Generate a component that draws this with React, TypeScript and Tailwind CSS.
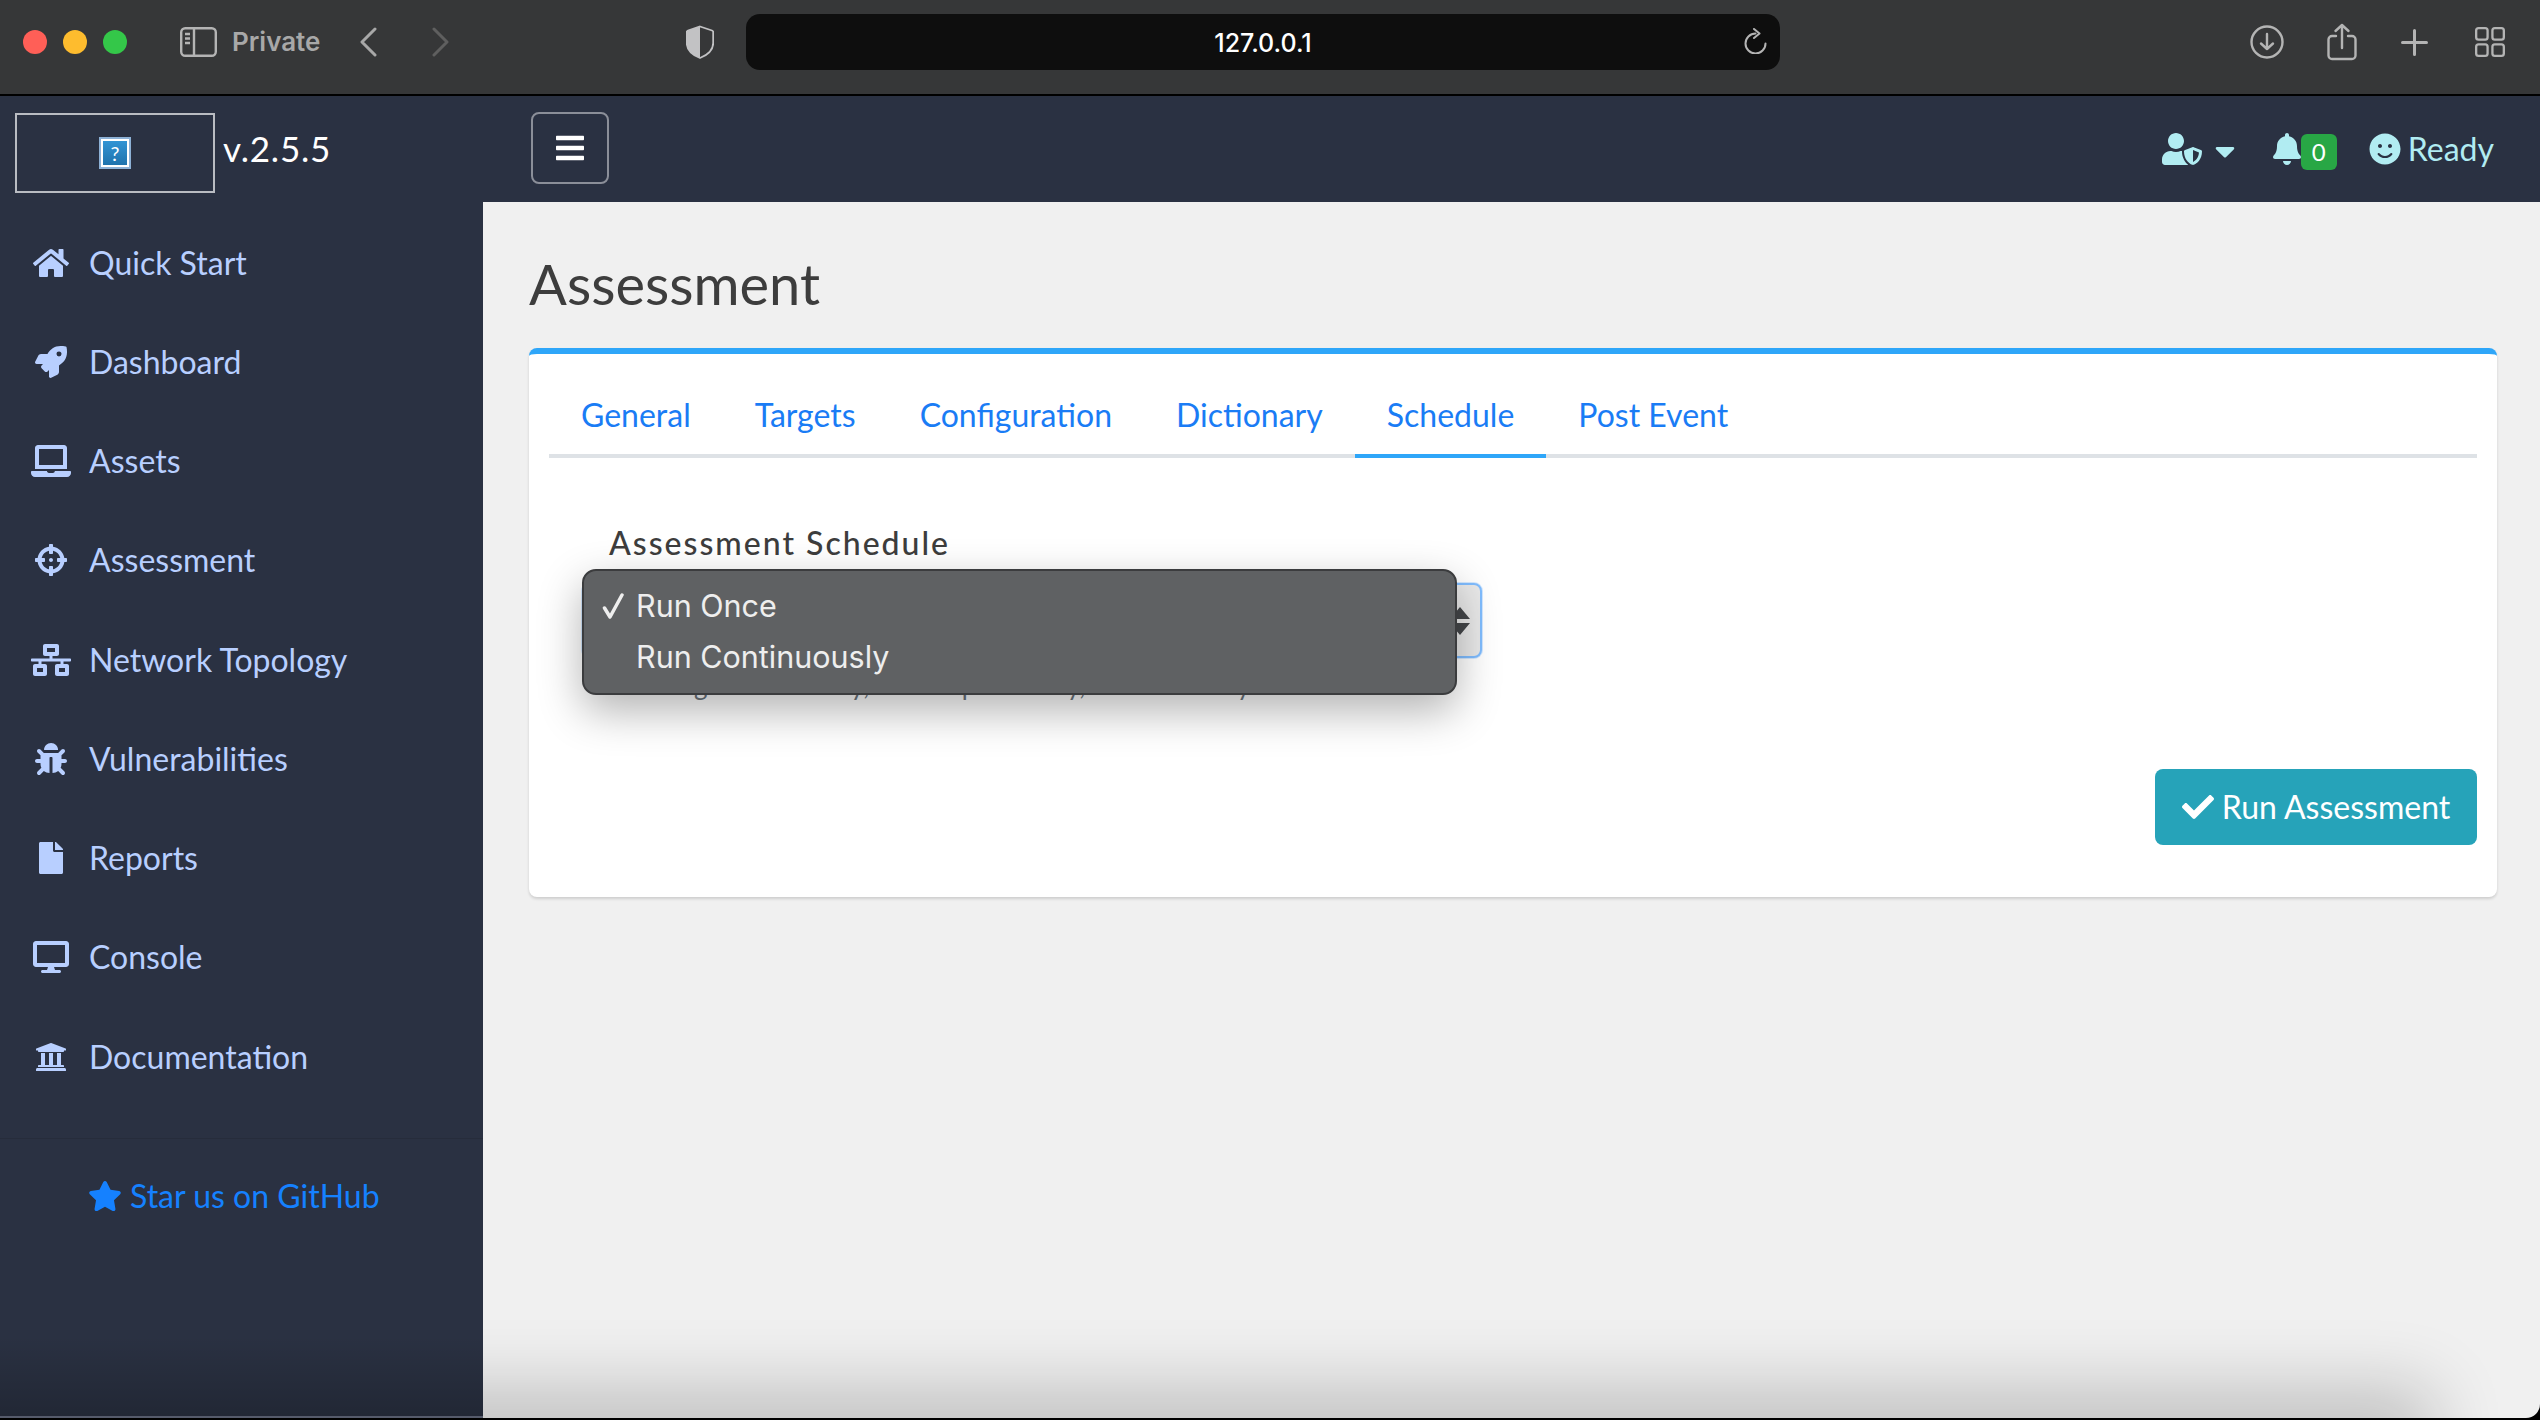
import {
  FaBars,
  FaBell,
  FaBug,
  FaCaretDown,
  FaCheck,
  FaCrosshairs,
  FaDesktop,
  FaFile,
  FaHome,
  FaLaptop,
  FaNetworkWired,
  FaRocket,
  FaSmile,
  FaStar,
  FaUniversity,
  FaUserShield,
} from "react-icons/fa";

const navItems = [
  { label: "Quick Start", Icon: FaHome, iconSize: "h-8 w-9" },
  { label: "Dashboard", Icon: FaRocket, iconSize: "h-8 w-8" },
  { label: "Assets", Icon: FaLaptop, iconSize: "h-8 w-10" },
  { label: "Assessment", Icon: FaCrosshairs, iconSize: "h-8 w-8" },
  { label: "Network Topology", Icon: FaNetworkWired, iconSize: "h-8 w-10" },
  { label: "Vulnerabilities", Icon: FaBug, iconSize: "h-8 w-8" },
  { label: "Reports", Icon: FaFile, iconSize: "h-8 w-6" },
  { label: "Console", Icon: FaDesktop, iconSize: "h-8 w-9" },
  { label: "Documentation", Icon: FaUniversity, iconSize: "h-8 w-8" },
];

const tabs = ["General", "Targets", "Configuration", "Dictionary", "Schedule", "Post Event"];

function BrowserBar() {
  return (
    <div className="flex h-[94px] shrink-0 items-center bg-[#363738] pb-[10px] pl-[23px] text-[#b4b4b4] font-['Inter',sans-serif]">
      <span className="size-6 rounded-full bg-[#ff5f57]" />
      <span className="ml-4 size-6 rounded-full bg-[#febc2e]" />
      <span className="ml-4 size-6 rounded-full bg-[#34c749]" />

      <svg className="ml-[53px] h-[30px] w-[37px]" viewBox="0 0 37 30" fill="none" stroke="currentColor" strokeWidth="2.4">
        <rect x="1.2" y="1.2" width="34.6" height="27.6" rx="4" />
        <path d="M14 1.2v27.6M5 7h5M5 11.5h5M5 16h5" />
      </svg>
      <span className="ml-[15px] w-[88px] text-[26px] leading-none font-semibold text-[#a8a8a8]">Private</span>

      <svg className="ml-[40px] h-[30px] w-[17px]" viewBox="0 0 17 30" fill="none" stroke="#a8a8a8" strokeWidth="3" strokeLinecap="round" strokeLinejoin="round">
        <path d="M15 2 2 15l13 13" />
      </svg>
      <svg className="ml-[55px] h-[30px] w-[17px]" viewBox="0 0 17 30" fill="none" stroke="#5f5f5f" strokeWidth="3" strokeLinecap="round" strokeLinejoin="round">
        <path d="m2 2 13 13L2 28" />
      </svg>

      <svg className="ml-[237px] h-[34px] w-[28px]" viewBox="0 0 28 34">
        <path d="M14 1.5 26 5.5c.8.3 1.2.9 1.2 1.6V18c0 7-5.5 12-13.2 15C6.300 30 .8 25 .8 18V7.100c0-.7.4-1.300 1.200-1.600Z" fill="none" stroke="#c2c2c4" strokeWidth="1.800" />
        <path d="M14 1.500 2 5.500C1.200 5.800.8 6.400.8 7.100V18c0 7 5.500 12 13.200 15Z" fill="#c2c2c4" />
      </svg>

      <div className="relative ml-8 flex h-14 w-[1034px] items-center justify-center rounded-[14px] bg-[#0e0e0e]">
        <span className="mt-[2px] text-[25px] leading-none font-medium text-white">127.0.0.1</span>
        <svg className="absolute right-[13px] top-[14px] h-[26px] w-[23px]" viewBox="0 0 23 26" fill="none" stroke="currentColor" strokeWidth="2" strokeLinecap="round" strokeLinejoin="round">
          <path d="M11.500 5.500a10 10 0 1 0 10 10" />
          <path d="m10 1 5.500 4.500L10 10" />
        </svg>
      </div>

      <svg className="ml-[470px] size-[34px]" viewBox="0 0 34 34" fill="none" stroke="currentColor" strokeWidth="2.400" strokeLinecap="round" strokeLinejoin="round">
        <circle cx="17" cy="17" r="15.500" />
        <path d="M17 9v15M11 18.500l6 5.500 6-5.500" />
      </svg>
      <svg className="ml-[43px] h-[38px] w-[30px]" viewBox="0 0 30 38" fill="none" stroke="currentColor" strokeWidth="2.400" strokeLinecap="round" strokeLinejoin="round">
        <path d="M9 13H5a3.500 3.500 0 0 0-3.500 3.500v16A3.500 3.500 0 0 0 5 36h20a3.500 3.500 0 0 0 3.500-3.500v-16A3.500 3.500 0 0 0 25 13h-4" />
        <path d="M15 25V2M8.500 8 15 2l6.500 6" />
      </svg>
      <svg className="ml-[44px] size-[27px]" viewBox="0 0 27 27" fill="none" stroke="currentColor" strokeWidth="3" strokeLinecap="round">
        <path d="M13.500 1.500v24M1.500 13.500h24" />
      </svg>
      <svg className="ml-[47px] size-[30px]" viewBox="0 0 31 31" fill="none" stroke="currentColor" strokeWidth="2.400">
        <rect x="1.200" y="1.200" width="11.800" height="11.800" rx="2.500" />
        <rect x="18" y="1.200" width="11.800" height="11.800" rx="2.500" />
        <rect x="1.200" y="18" width="11.800" height="11.800" rx="2.500" />
        <rect x="18" y="18" width="11.800" height="11.800" rx="2.500" />
      </svg>
    </div>
  );
}

function AppHeader() {
  return (
    <header className="flex h-[106px] shrink-0 items-center bg-[#2a3142]">
      <div className="flex w-[531px] shrink-0 items-center pl-[15px]">
        <div className="mt-[8px] flex h-20 w-[200px] items-center justify-center border-2 border-[#b9bcc2]">
          <div className="border-2 border-[#8db1d6] bg-white p-[2px]">
            <div className="flex size-[24px] items-center justify-center bg-gradient-to-b from-[#3294d4] to-[#1f73ad] text-[20px] leading-none text-white">?</div>
          </div>
        </div>
        <span className="mb-[2px] ml-2 text-[35px] leading-none tracking-[0.8px] text-white">v.2.5.5</span>
      </div>
      <button className="mb-[2px] flex h-[72px] w-[78px] items-center justify-center rounded-[8px] border-2 border-[#8b8f99] text-white">
        <FaBars className="h-8 w-7" />
      </button>

      <div className="ml-auto flex items-center pr-[46px] text-[#b1ecf2]">
        <FaUserShield className="h-8 w-10" />
        <FaCaretDown className="ml-[13px] mt-[4px] h-8 w-5" />
        <FaBell className="ml-[38px] h-8 w-7" />
        <span className="mt-[6px] flex h-9 w-9 items-center justify-center rounded-[6px] bg-[#28a745] text-[24px] leading-none text-white">0</span>
        <FaSmile className="ml-8 size-8" />
        <span className="ml-[7px] text-[32px] leading-none">Ready</span>
      </div>
    </header>
  );
}

function Sidebar() {
  return (
    <aside className="relative z-30 flex w-[483px] shrink-0 flex-col border-b-2 border-[#565b6b] bg-[#2a3142] pt-[11px]">
      <nav className="flex flex-col">
        {navItems.map(({ label, Icon, iconSize }) => (
          <a key={label} className="flex h-[99.25px] items-center pl-[31px] text-[32px] text-[#b8cfff]">
            <span className="flex w-10 justify-center">
              <Icon className={iconSize} />
            </span>
            <span className="ml-[18px]">{label}</span>
          </a>
        ))}
      </nav>
      <div className="mt-8 border-t border-[#262c3b] pt-[40px] pl-[88px]">
        <a className="flex items-center text-[32px] leading-none text-[#1581ff]">
          <FaStar className="size-[34px]" />
          <span className="ml-[8px]">Star us on GitHub</span>
        </a>
      </div>
      {/* the same lower-edge shadow as on the main pane */}
      <div className="pointer-events-none absolute inset-x-0 bottom-0 h-[80px] bg-gradient-to-t from-black/20 to-transparent" />
    </aside>
  );
}

function ScheduleForm() {
  return (
    <div className="mt-[65px]">
      <label className="block pl-[60px] text-[32px] leading-10 font-medium tracking-[2px] text-[#3d3d3d]">Assessment Schedule</label>
      <div className="relative ml-[33px] mt-[20px] w-[900px]">
        <div className="flex h-[75px] items-center justify-end rounded-[8px] border-2 border-[#80bdff] bg-[#e9e9e9] pr-[6px] shadow-[0_0_0_1px_rgba(128,189,255,0.35)]">
          <svg className="h-[28px] w-7" viewBox="0 0 28 28" fill="#45474a">
            <path d="M14 0 24 12H4ZM14 28 4 16h20Z" />
          </svg>
        </div>
        <p className="ml-[32px] mt-[11px] whitespace-nowrap text-[26px] leading-8 text-[#6c757d]">Running a scan hourly, or on a preset day, or at a weekly schedule.</p>

        <div className="absolute -top-[14px] left-0 z-10 flex h-[126px] w-[875px] flex-col rounded-[14px] border-2 border-[#3b3c3e] bg-[#5f6163] pl-[16px] pt-[9px] text-[30.5px] leading-[51px] text-[#eeeeee] shadow-[0_16px_44px_rgba(0,0,0,0.3)] font-['Inter',sans-serif]">
          <div className="flex items-center">
            <svg className="ml-[2px] h-[26px] w-[22px]" viewBox="0 0 22 26" fill="none" stroke="#eeeeee" strokeWidth="3.500" strokeLinecap="round" strokeLinejoin="round">
              <path d="M2.500 15 8 24 20 2" />
            </svg>
            <span className="ml-[12px]">Run Once</span>
          </div>
          <span className="ml-[36px]">Run Continuously</span>
        </div>
      </div>
    </div>
  );
}

function AssessmentCard() {
  return (
    <section className="flex h-[549px] flex-col rounded-[8px] border-t-[6px] border-[#2ea6f9] bg-white px-5 pt-[36px] shadow-[0_2px_3px_rgba(0,0,0,0.14)]">
      <div className="flex border-b-4 border-[#dee2e6]">
        {tabs.map((tab) => (
          <a
            key={tab}
            className={
              tab === "Schedule"
                ? "-mb-1 flex h-[68px] items-center border-b-4 border-[#2ea6f9] px-8 pb-[15px] text-[32px] text-[#1a7cf5]"
                : "-mb-1 flex h-[68px] items-center px-8 pb-[19px] text-[32px] text-[#1a7cf5]"
            }
          >
            {tab}
          </a>
        ))}
      </div>
      <ScheduleForm />
      <div className="mb-[52px] mt-auto flex justify-end">
        <button className="flex h-[76px] w-[322px] items-center justify-center rounded-[8px] bg-[#26a3b9] text-[32px] text-white">
          <FaCheck className="size-8" />
          <span className="ml-[8px]">Run Assessment</span>
        </button>
      </div>
    </section>
  );
}

export default function App() {
  return (
    <div className="relative h-[1420px] w-[2540px] overflow-hidden bg-black font-['Lato',sans-serif]">
      <div className="relative flex h-[1418px] flex-col overflow-hidden rounded-br-[14px]">
        <BrowserBar />
        <div className="h-[2px] shrink-0 bg-black" />
        <AppHeader />
        <div className="flex flex-1">
          <Sidebar />
          <main className="flex-1 bg-[#f0f0f0] pl-[46px] pr-[43px]">
            <h1 className="flex h-[146px] items-center pt-[18px] text-[56px] leading-none font-normal text-[#3d3d3d]">Assessment</h1>
            <AssessmentCard />
          </main>
        </div>
        {/* shadow the window picks up along its lower edge */}
        <div className="pointer-events-none absolute -bottom-[24px] left-[-100px] z-20 h-[20px] w-[2500px] bg-black/30 shadow-[0_0_70px_34px_rgba(0,0,0,0.2)]" />
      </div>
    </div>
  );
}
